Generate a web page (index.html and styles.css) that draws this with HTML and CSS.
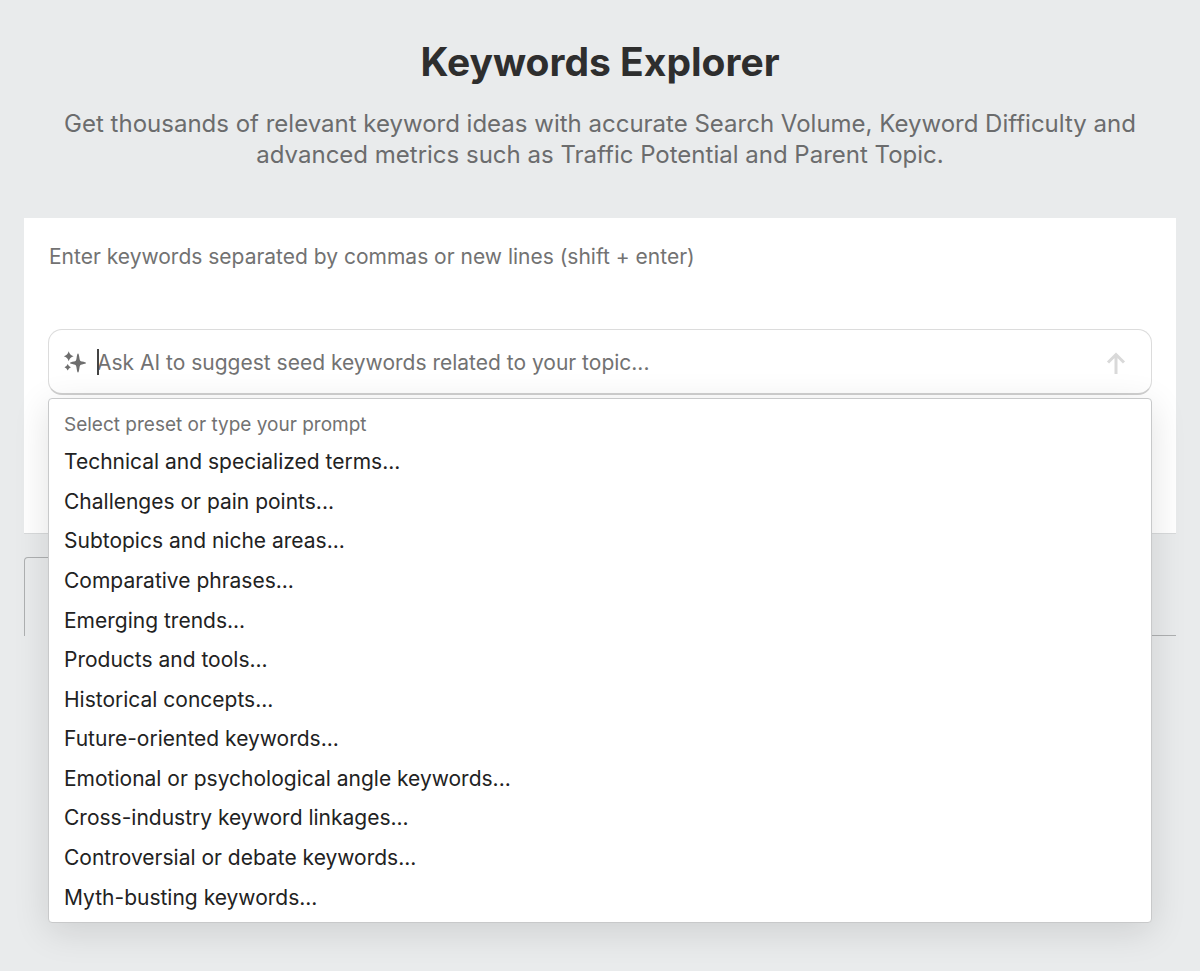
FILE: index.html
```html
<!DOCTYPE html>
<html lang="en">

<head>
    <meta charset="UTF-8">
    <meta name="viewport" content="width=device-width, initial-scale=1.0">
    <title>Keywords Explorer</title>
    <link rel="stylesheet" href="styles.css">
</head>

<body>
    <header class="intro">
        <h1>Keywords Explorer</h1>
        <p>Get thousands of relevant keyword ideas with accurate Search Volume, Keyword Difficulty and advanced metrics such as Traffic Potential and Parent Topic.</p>
    </header>
    <main>
        <section class="search-panel">
            <textarea class="keywords-input" aria-label="Keywords" placeholder="Enter keywords separated by commas or new lines (shift + enter)"></textarea>
            <div class="ai-wrap">
                <form class="ai-box">
                    <svg class="sparkle-icon" viewBox="0 0 22 22" aria-hidden="true">
                        <path d="M14 2.5 C14.7 2.5 15 4 15.5 7.5 C15.8 9.7 16.3 10.2 18 10.6 C20.5 11.1 22 11.3 22 12 C22 12.7 20.5 12.9 18 13.4 C16.3 13.8 15.8 14.3 15.5 16.5 C15 20 14.7 21.5 14 21.5 C13.3 21.5 13 20 12.5 16.5 C12.2 14.3 11.7 13.8 10 13.4 C7.5 12.9 6 12.7 6 12 C6 11.3 7.5 11.1 10 10.6 C11.7 10.2 12.2 9.7 12.5 7.5 C13 4 13.3 2.5 14 2.5Z" />
                        <path d="M4.7 0.2 Q5.7 4.2 9.6 5.2 Q5.7 6.2 4.7 10.2 Q3.7 6.2 -0.2 5.2 Q3.7 4.2 4.7 0.2Z" />
                        <path d="M3.7 13 Q4.6 15.3 6.9 16.2 Q4.6 17.1 3.7 19.4 Q2.8 17.1 0.5 16.2 Q2.8 15.3 3.7 13Z" />
                    </svg>
                    <div class="ai-field">
                        <input type="text" aria-label="Ask AI" placeholder="Ask AI to suggest seed keywords related to your topic...">
                        <span class="caret"></span>
                    </div>
                    <button class="send-btn" type="button" aria-label="Send">
                        <svg viewBox="0 0 18 22" aria-hidden="true">
                            <path d="M9 22 V3 M1 10.5 L9 2.5 L17 10.5" />
                        </svg>
                    </button>
                </form>
                <div class="preset-menu">
                    <p>Select preset or type your prompt</p>
                    <button type="button">Technical and specialized terms...</button>
                    <button type="button">Challenges or pain points...</button>
                    <button type="button">Subtopics and niche areas...</button>
                    <button type="button">Comparative phrases...</button>
                    <button type="button">Emerging trends...</button>
                    <button type="button">Products and tools...</button>
                    <button type="button">Historical concepts...</button>
                    <button type="button">Future-oriented keywords...</button>
                    <button type="button">Emotional or psychological angle keywords...</button>
                    <button type="button">Cross-industry keyword linkages...</button>
                    <button type="button">Controversial or debate keywords...</button>
                    <button type="button">Myth-busting keywords...</button>
                </div>
            </div>
        </section>
        <!-- Tab strip that sits behind the open menu -->
        <div class="tabs">
            <div class="tab-active"></div>
            <div class="tab-rest"></div>
        </div>
    </main>
</body>

</html>
```

FILE: styles.css
```css
* {
    box-sizing: border-box;
}

body {
    margin: 0;
    padding: 0 24px;
    min-height: 100vh;
    background-color: #e9ebec;
    color: #222;
    font-family: Inter, sans-serif;
    font-size: 21px;
}

button, input, textarea {
    font-family: inherit;
    font-size: inherit;
    color: inherit;
}

button {
    cursor: pointer;
}

.intro {
    padding: 38px 24px 48px;
    text-align: center;
}
.intro h1 {
    margin: 0 0 22px;
    color: #2e2e2e;
    font-size: 39px;
    line-height: 48px;
}
.intro p {
    max-width: 1100px;
    margin: 0 auto;
    color: #6b6c6d;
    font-size: 24px;
    line-height: 31px;
}

.search-panel {
    padding: 24px 24px 138px;
    background-color: white;
    border-bottom: 1px solid #d8dadb;
}
.keywords-input {
    display: block;
    width: 100%;
    height: 87px;
    padding: 0 1px;
    border: none;
    outline: none;
    resize: none;
    background: none;
    line-height: 30px;
}
.keywords-input::placeholder, .ai-field input::placeholder {
    color: #727272;
    opacity: 1;
}

.ai-wrap {
    position: relative;
}
.ai-box {
    display: flex;
    align-items: center;
    height: 66px;
    padding: 0 16px 0 15px;
    background-color: white;
    border: 1px solid #dcdcdc;
    border-bottom: 2px solid #d0d0d0;
    border-radius: 14px;
}
.sparkle-icon {
    width: 22px;
    height: 22px;
    fill: #6e6e6e;
    overflow: visible;
}
.ai-field {
    position: relative;
    flex: 1;
    margin-left: 11px;
}
.ai-field input {
    display: block;
    width: 100%;
    height: 30px;
    padding: 2px 0 0;
    border: none;
    outline: none;
    background: none;
}
.caret {
    position: absolute;
    top: 2px;
    left: 0;
    width: 2px;
    height: 26px;
    background-color: #444;
}
.send-btn {
    display: flex;
    justify-content: center;
    width: 38px;
    padding: 2px 0 0;
    border: none;
    background: none;
}
.send-btn svg {
    width: 18px;
    height: 22px;
    fill: none;
    stroke: #d9d9d9;
    stroke-width: 3;
    overflow: visible;
}

.preset-menu {
    position: absolute;
    top: 69px;
    left: 0;
    right: 0;
    display: flex;
    flex-direction: column;
    height: 525px;
    padding: 11px 0 5px;
    background-color: white;
    border: 1px solid #c8c9ca;
    border-radius: 4px;
    box-shadow: 0 8px 36px rgba(0, 0, 0, 0.12);
}
.preset-menu p {
    margin: 0;
    padding: 0 15px 2px;
    color: #727272;
    font-size: 19px;
    line-height: 30px;
}
.preset-menu button {
    flex: 1;
    padding: 0 15px;
    border: none;
    background: none;
    text-align: left;
}

.tabs {
    display: flex;
    height: 79px;
    margin-top: 23px;
}
.tab-active {
    width: 240px;
    border: 1px solid #aeb0b1;
    border-bottom: none;
    border-radius: 4px 4px 0 0;
}
.tab-rest {
    flex: 1;
    border-bottom: 1px solid #aeb0b1;
}
```
